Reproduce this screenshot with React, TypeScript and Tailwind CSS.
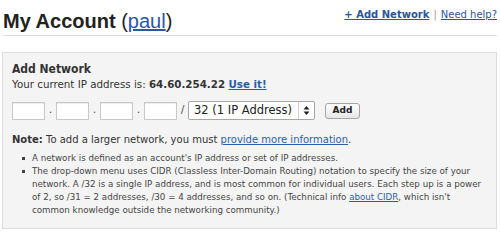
export default function App() {
    const verdana = { fontFamily: '"DejaVu Sans", Verdana, sans-serif' };
    const condensed = { fontFamily: '"DejaVu Sans Condensed", "DejaVu Sans", Verdana, sans-serif' };

    return (
        <div className="w-[500px] h-[233px] bg-white overflow-hidden" style={verdana}>
            <header className="flex items-end justify-between mx-[3px] h-[36px] border-b border-[#dedede]">
                <h1 className="text-[20px] leading-[28px] font-bold text-[#222]" style={{ fontFamily: '"Liberation Sans", Arial, sans-serif' }}>
                    My Account <span className="font-normal">(</span><a href="#" className="font-normal text-[#2857a4] underline">paul</a><span className="font-normal">)</span>
                </h1>
                <div className="text-[10px] leading-[15px] mb-[13px] text-[#999]">
                    <a href="#" className="font-bold text-[#2b5596] underline">+ Add Network</a>
                    <span className="mx-[4px]">|</span>
                    <a href="#" className="text-[#2b5596] underline">Need help?</a>
                </div>
            </header>

            <section className="mt-[16px] ml-[2px] mr-[3px] h-[177px] bg-[#f4f4f4] border border-[#dcdcdc] px-[9px] pt-[8px] text-[#333]">
                <h2 className="text-[12px] font-bold leading-[16px] text-[#333]" style={condensed}>Add Network</h2>
                <p className="text-[10.3px] leading-[14px]">
                    Your current IP address is: <b>64.60.254.22</b> <a href="#" className="font-bold text-[#2b5fa8] underline">Use it!</a>
                </p>

                <div className="flex items-center mt-[10px] h-[19px] text-[11px]">
                    {[0, 1, 2, 3].map((i) => (
                        <div key={i} className="flex items-center">
                            {i > 0 && <span className="w-[11px] text-center text-[#555]">.</span>}
                            <input className="w-[33px] h-[18px] bg-white border border-[#c8c8c8] shadow-[inset_0_1px_1px_rgba(0,0,0,0.08)] outline-none" />
                        </div>
                    ))}
                    <span className="w-[11px] text-center text-[#555]">/</span>
                    <div className="flex items-center justify-between w-[127px] h-[19px] bg-white border border-[#a6a6a6] rounded-[2px] pl-[5px] pr-[4px] text-[11.5px] text-[#222]">
                        <span>32 (1 IP Address)</span>
                        <div className="flex items-center h-full border-l border-[#d0d0d0] pl-[4px]">
                            <svg width="7" height="11" viewBox="0 0 7 11">
                                <path d="M0.5 4.5 L3.5 1 L6.5 4.5 Z" fill="#222" />
                                <path d="M0.5 6.5 L3.5 10 L6.5 6.5 Z" fill="#222" />
                            </svg>
                        </div>
                    </div>
                    <button className="ml-[10px] w-[35px] h-[16px] flex items-center justify-center bg-gradient-to-b from-white to-[#e6e6e6] border border-[#a6a6a6] rounded-[3px] text-[9px] font-bold text-[#222]">
                        Add
                    </button>
                </div>

                <p className="mt-[13px] text-[10px] leading-[14px]">
                    <b>Note:</b> To add a larger network, you must <a href="#" className="text-[#2b5fa8] underline">provide more information</a>.
                </p>

                <ul className="mt-[5px] ml-[10px] text-[8.7px] leading-[13px] text-[#444]">
                    <li className="flex">
                        <span className="w-[10px] shrink-0 pt-[5px]"><span className="block w-[3px] h-[3px] bg-[#444]" /></span>
                        <span className="whitespace-nowrap">A network is defined as an account's IP address or set of IP addresses.</span>
                    </li>
                    <li className="flex">
                        <span className="w-[10px] shrink-0 pt-[5px]"><span className="block w-[3px] h-[3px] bg-[#444]" /></span>
                        <span className="whitespace-nowrap">
                            The drop-down menu uses CIDR (Classless Inter-Domain Routing) notation to specify the size of your<br />
                            network. A /32 is a single IP address, and is most common for individual users. Each step up is a power<br />
                            of 2, so /31 = 2 addresses, /30 = 4 addresses, and so on. (Technical info <a href="#" className="text-[#2b5fa8] underline">about CIDR</a>, which isn't<br />
                            common knowledge outside the networking community.)
                        </span>
                    </li>
                </ul>
            </section>
        </div>
    );
}
